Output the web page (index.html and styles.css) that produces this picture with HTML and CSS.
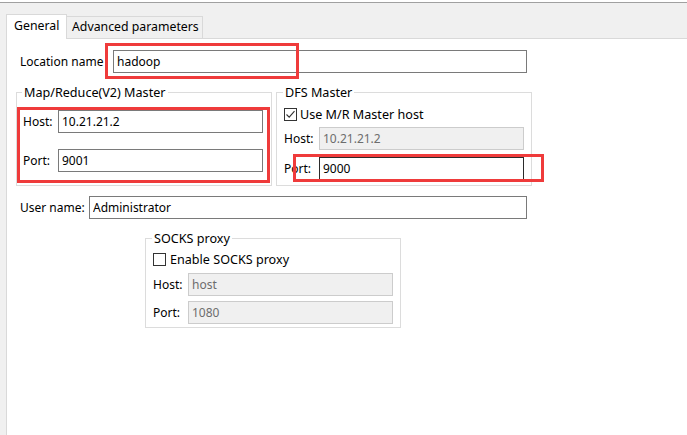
FILE: index.html
```html
<!DOCTYPE html>
<html>
<head>
<meta charset="utf-8">
<title>Location</title>
<link rel="stylesheet" href="styles.css">
</head>
<body>
<div class="topedge"></div>
<div class="tabbar">
  <div class="tab tab-active">General</div>
  <div class="tab">Advanced parameters</div>
</div>
<div class="content">
  <div class="row row-loc">
    <span class="lbl lbl-loc">Location name</span>
    <input class="field field-loc" value="hadoop">
  </div>
  <div class="groups">
    <fieldset class="group group-mr">
      <legend>Map/Reduce(V2) Master</legend>
      <div class="frow"><span class="flbl">Host:</span><input class="field" value="10.21.21.2"></div>
      <div class="frow frow-mr2"><span class="flbl">Port:</span><input class="field" value="9001"></div>
    </fieldset>
    <fieldset class="group group-dfs">
      <legend>DFS Master</legend>
      <div class="check"><span class="box"><svg width="11" height="11" viewBox="0 0 11 11"><path d="M1.5 5.5 L4.2 8.2 L9.5 2.2" fill="none" stroke="#333" stroke-width="1.1"/></svg></span>Use M/R Master host</div>
      <div class="frow frow-d1"><span class="flbl">Host:</span><input class="field" value="10.21.21.2" disabled></div>
      <div class="frow frow-d2"><span class="flbl">Port:</span><input class="field field-focus" value="9000"></div>
    </fieldset>
  </div>
  <div class="row row-user">
    <span class="lbl lbl-user">User name:</span>
    <input class="field field-user" value="Administrator">
  </div>
  <fieldset class="group group-socks">
    <legend>SOCKS proxy</legend>
    <div class="check check-socks"><span class="box"></span>Enable SOCKS proxy</div>
    <div class="frow frow-s1"><span class="flbl">Host:</span><input class="field" value="host" disabled></div>
    <div class="frow frow-s2"><span class="flbl">Port:</span><input class="field" value="1080" disabled></div>
  </fieldset>
</div>
<div class="mark mark-1"></div>
<div class="mark mark-2"></div>
<div class="mark mark-3"></div>
</body>
</html>
```

FILE: styles.css
```css
* { box-sizing: border-box; }
html, body { margin: 0; height: 100%; }
body {
  background: #f0f0f0;
  font-family: "Noto Sans", "Liberation Sans", sans-serif;
  font-size: 12px;
  color: #000;
  overflow: hidden;
  position: relative;
}
.topedge { height: 3px; background: #fff; border-bottom: 1px solid #a0a0a0; }
.tabbar { height: 35px; display: flex; align-items: flex-end; padding-left: 6px; }
.tab {
  height: 22px; width: 136px; padding-left: 5px;
  border-top: 1px solid #d9d9d9; border-right: 1px solid #d9d9d9;
  line-height: 20px; white-space: nowrap; font-size: 12.3px;
}
.tab-active {
  height: 25px; width: 61px; padding-left: 7px;
  border: 1px solid #d9d9d9; border-bottom: 0;
  background: #fff; margin-bottom: -1px;
  position: relative; z-index: 1; line-height: 22px;
}
.content {
  margin-left: 6px;
  border-left: 1px solid #d9d9d9;
  border-top: 1px solid #d9d9d9;
  background: #fff;
  height: calc(100% - 38px);
  padding: 11px 0 0 9px;
}
.row { display: flex; align-items: center; height: 23px; padding-left: 4px; }
.lbl { white-space: nowrap; }
.lbl-loc { width: 93px; }
.lbl-user { width: 69px; }
.row-user { margin-top: 10px; }
.field {
  height: 23px; width: 205px;
  border: 1px solid #7a7a7a;
  padding: 0 3px;
  font: inherit; color: #000; background: #fff;
  outline: none; margin: 0;
}
.field-loc { width: 414px; }
.field-user { width: 438px; }
.field-focus { border-color: #2b2b2b; }
.field:disabled { background: #f0f0f0; border-color: #cccccc; color: #6d6d6d; -webkit-text-fill-color: #6d6d6d; }
.groups { display: flex; gap: 4px; margin-top: 11px; }
.group {
  margin: 0; min-width: 0; width: 256px;
  border: 1px solid #dcdcdc;
}
.group legend { padding: 0 2px; margin-left: -1px; line-height: 17px; height: 17px; font-size: 12.6px; }
.group-mr { padding: 9px 8px 13px 6px; }
.group-dfs { padding: 6px 7px 5px 7px; }
.frow { display: flex; align-items: center; height: 23px; }
.flbl { width: 35px; white-space: nowrap; }
.frow-mr2 { margin-top: 16px; }
.frow-d1 { margin-top: 6px; }
.frow-d2 { margin-top: 7px; }
.check { display: flex; align-items: center; height: 14px; gap: 3px; white-space: nowrap; font-size: 12.6px; }
.check-socks { gap: 4px; }
.box {
  width: 13px; height: 13px; border: 1px solid #333; background: #fff;
  display: flex; align-items: center; justify-content: center;
}
.group-socks { margin: 11px 0 0 129px; padding: 5px 7px 3px 7px; }
.frow-s1 { margin-top: 7px; }
.frow-s2 { margin-top: 5px; }
.mark { position: absolute; border: 3px solid #ef3b3b; }
.mark-1 { left: 105px; top: 43px; width: 194px; height: 36px; }
.mark-2 { left: 17px; top: 107px; width: 253px; height: 76px; }
.mark-3 { left: 293px; top: 154px; width: 251px; height: 28px; }
```
